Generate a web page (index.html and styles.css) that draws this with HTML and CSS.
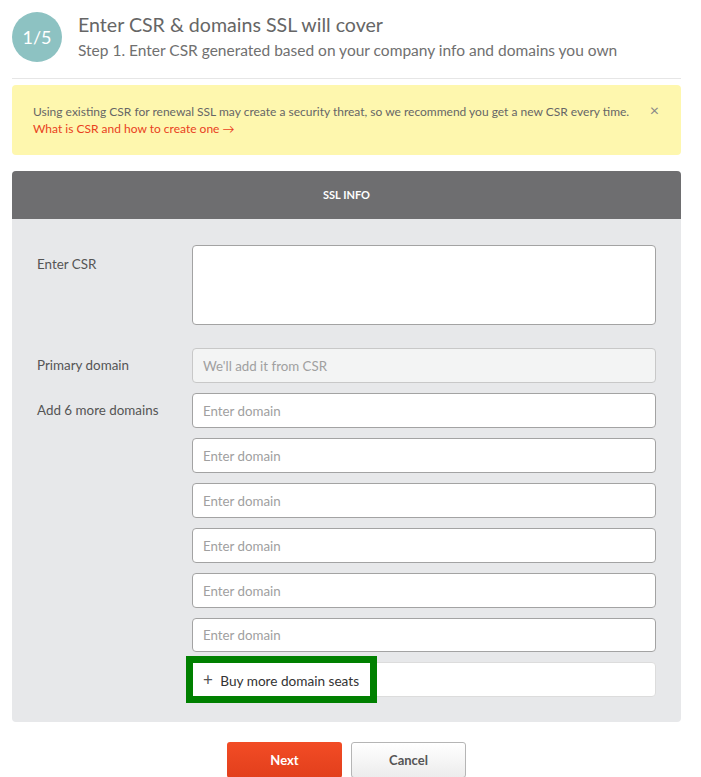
FILE: index.html
```html
<!DOCTYPE html>
<html lang="en">
<head>
  <meta charset="UTF-8" />
  <meta name="viewport" content="width=device-width, initial-scale=1.0"/>
  <title>Enter CSR</title>
  <link rel="stylesheet" href="styles.css">
</head>
<body>
  <header class="step">
    <div class="step-num">1/5</div>
    <div>
      <h1>Enter CSR &amp; domains SSL will cover</h1>
      <p>Step 1. Enter CSR generated based on your company info and domains you own</p>
    </div>
  </header>

  <div class="notice">
    <div>
      <p>Using existing CSR for renewal SSL may create a security threat, so we recommend you get a new CSR every time.</p>
      <a href="#">What is CSR and how to create one &rarr;</a>
    </div>
    <span class="notice-close">&times;</span>
  </div>

  <section class="panel">
    <div class="panel-head">SSL INFO</div>
    <div class="panel-body">
      <div class="row">
        <label class="row-label csr-label">Enter CSR</label>
        <textarea class="field csr"></textarea>
      </div>
      <div class="row primary">
        <label class="row-label">Primary domain</label>
        <input class="field" type="text" placeholder="We'll add it from CSR" disabled>
      </div>
      <div class="row">
        <label class="row-label">Add 6 more domains</label>
        <div class="domains">
          <input class="field" type="text" placeholder="Enter domain">
          <input class="field" type="text" placeholder="Enter domain">
          <input class="field" type="text" placeholder="Enter domain">
          <input class="field" type="text" placeholder="Enter domain">
          <input class="field" type="text" placeholder="Enter domain">
          <input class="field" type="text" placeholder="Enter domain">
          <div class="buy-row">
            <button class="buy-more"><span class="plus">+</span> Buy more domain seats</button>
          </div>
        </div>
      </div>
    </div>
  </section>

  <div class="actions">
    <button class="btn btn-next">Next</button>
    <button class="btn btn-cancel">Cancel</button>
  </div>
</body>
</html>
```

FILE: styles.css
```css
body {
  margin: 0;
  padding: 12px 20px 0 12px;
  font-family: Lato, "Noto Sans", sans-serif;
  color: #555;
  background: #fff;
}

.step {
  display: flex;
  align-items: flex-start;
  gap: 16px;
  height: 66px;
  border-bottom: 1px solid #e6e6e6;
}

.step-num {
  flex: none;
  width: 50px;
  height: 50px;
  border-radius: 50%;
  background: #8dc2c2;
  color: #fff;
  font-size: 18px;
  display: flex;
  align-items: center;
  justify-content: center;
}

.step h1 {
  margin: 1px 0 0;
  font-size: 19.6px;
  line-height: 24px;
  font-weight: normal;
  color: #666;
}

.step p {
  margin: 3px 0 0;
  font-size: 15.5px;
  line-height: 20px;
  color: #707070;
}

.notice {
  display: flex;
  justify-content: space-between;
  margin-top: 6px;
  padding: 18px 22px 18px 21px;
  background: #fef7ae;
  border-radius: 4px;
  font-size: 12px;
  line-height: 17px;
}

.notice p {
  margin: 0;
  color: #666;
}

.notice a {
  color: #e9411d;
  text-decoration: none;
}

.notice-close {
  color: #888;
  font-size: 16px;
  line-height: 14px;
}

.panel {
  margin-top: 16px;
  border-radius: 4px;
  overflow: hidden;
  background: #e7e8ea;
}

.panel-head {
  height: 48px;
  line-height: 48px;
  background: #6e6e70;
  color: #fff;
  text-align: center;
  font-size: 11px;
  font-weight: bold;
}

.panel-body {
  padding: 26px 25px 25px;
}

.row {
  display: grid;
  grid-template-columns: 155px 1fr;
  align-items: center;
}

.row + .row {
  margin-top: 10px;
}

.row.primary {
  margin-top: 23px;
}

.row-label {
  font-size: 13.4px;
  color: #555;
  align-self: start;
  line-height: 35px;
}

.csr-label {
  line-height: 38px;
}

.field {
  box-sizing: border-box;
  width: 100%;
  height: 35px;
  padding: 0 10px;
  border: 1px solid #a3a3a3;
  border-radius: 4px;
  background: #fff;
  font-family: inherit;
  font-size: 13.3px;
  color: #333;
  display: block;
}

.field::placeholder {
  color: #a0a0a0;
}

.field:disabled {
  background: #f3f4f4;
  border-color: #c8c8c8;
}

.csr {
  height: 80px;
  resize: none;
}

.domains {
  display: flex;
  flex-direction: column;
  gap: 10px;
}

.domains .field:nth-child(6) {
  height: 34px;
}

.buy-row {
  background: #fff;
  border: 1px solid #dcdcdc;
  border-radius: 4px;
  height: 35px;
  box-sizing: border-box;
  display: flex;
}

.buy-more {
  border: none;
  background: #fff;
  outline: 7px solid #008000;
  padding: 0 11px 0 10px;
  margin: 0;
  font-family: inherit;
  font-size: 13.6px;
  color: #333;
  cursor: pointer;
}

.plus {
  font-size: 17px;
  color: #555;
  margin-right: 4px;
}

.actions {
  display: flex;
  justify-content: center;
  gap: 9px;
  margin-top: 20px;
}

.btn {
  width: 115px;
  height: 36px;
  border-radius: 3px;
  font-family: inherit;
  font-size: 13px;
  font-weight: bold;
  cursor: pointer;
}

.btn-next {
  border: none;
  background: linear-gradient(to bottom, #f24c25, #e23f1c);
  color: #fff;
}

.btn-cancel {
  border: 1px solid #b5b5b5;
  background: linear-gradient(to bottom, #ffffff, #ececec);
  color: #555;
}
```
